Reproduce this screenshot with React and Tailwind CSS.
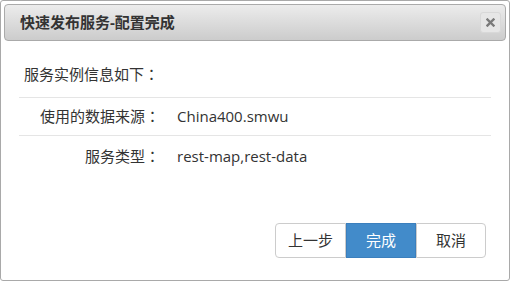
const Colon = () => (
  <span style={{ fontFamily: '"Noto Sans CJK TC", sans-serif' }}>：</span>
);

export default function App() {
  const rows = [
    { label: "使用的数据来源", value: "China400.smwu", h: "h-[38px]", line: true },
    { label: "服务类型", value: "rest-map,rest-data", h: "h-[40px]", line: false },
  ];

  return (
    <div
      className="w-[510px] h-[281px] bg-white border border-[#a9a9a9] rounded-[3px] p-[3px] flex flex-col text-[#333]"
      style={{ fontFamily: '"Open Sans", "Noto Sans CJK SC", sans-serif' }}
    >
      {/* Title bar */}
      <div className="h-[37px] shrink-0 flex items-center justify-between rounded-[4px] border border-[#aaa] bg-gradient-to-b from-[#ececec] to-[#cccccc] pl-[15px] pr-[4px]">
        <span className="text-[15px] font-bold text-[#333] leading-none">快速发布服务-配置完成</span>
        <button className="w-[21px] h-[21px] rounded-[3px] bg-[#e6e6e6] border border-[#d8d8d8] flex items-center justify-center">
          <svg width="9" height="9" viewBox="0 0 9 9">
            <path d="M1.5 1.5 L7.5 7.5 M7.5 1.5 L1.5 7.5" stroke="#7a7a7a" strokeWidth="2.4" strokeLinecap="square" />
          </svg>
        </button>
      </div>

      {/* Body */}
      <div className="flex-1 flex flex-col px-[15px]">
        <div className="pt-[22px] pb-[12px] pl-[5px] border-b border-[#e5e5e5] text-[15px] leading-[21px]">
          服务实例信息如下<Colon />
        </div>
        {rows.map((r) => (
          <div
            key={r.label}
            className={`flex items-center ${r.h} ${r.line ? "border-b border-[#e5e5e5]" : ""} text-[15px]`}
          >
            <div className="w-[141px] text-right">
              {r.label}
              <Colon />
            </div>
            <div className="pl-[17px]">{r.value}</div>
          </div>
        ))}

        <div className="flex-1" />

        <div className="flex justify-end pr-[5px] pb-[19px]">
          <button className="w-[71px] h-[35px] text-[15px] bg-white border border-[#ccc] rounded-l-[4px] text-[#333]">
            上一步
          </button>
          <button className="w-[70px] h-[35px] text-[15px] bg-[#428bca] border border-[#3b7fbd] text-white">
            完成
          </button>
          <button className="w-[70px] h-[35px] text-[15px] bg-white border border-[#ccc] rounded-r-[4px] text-[#333]">
            取消
          </button>
        </div>
      </div>
    </div>
  );
}
